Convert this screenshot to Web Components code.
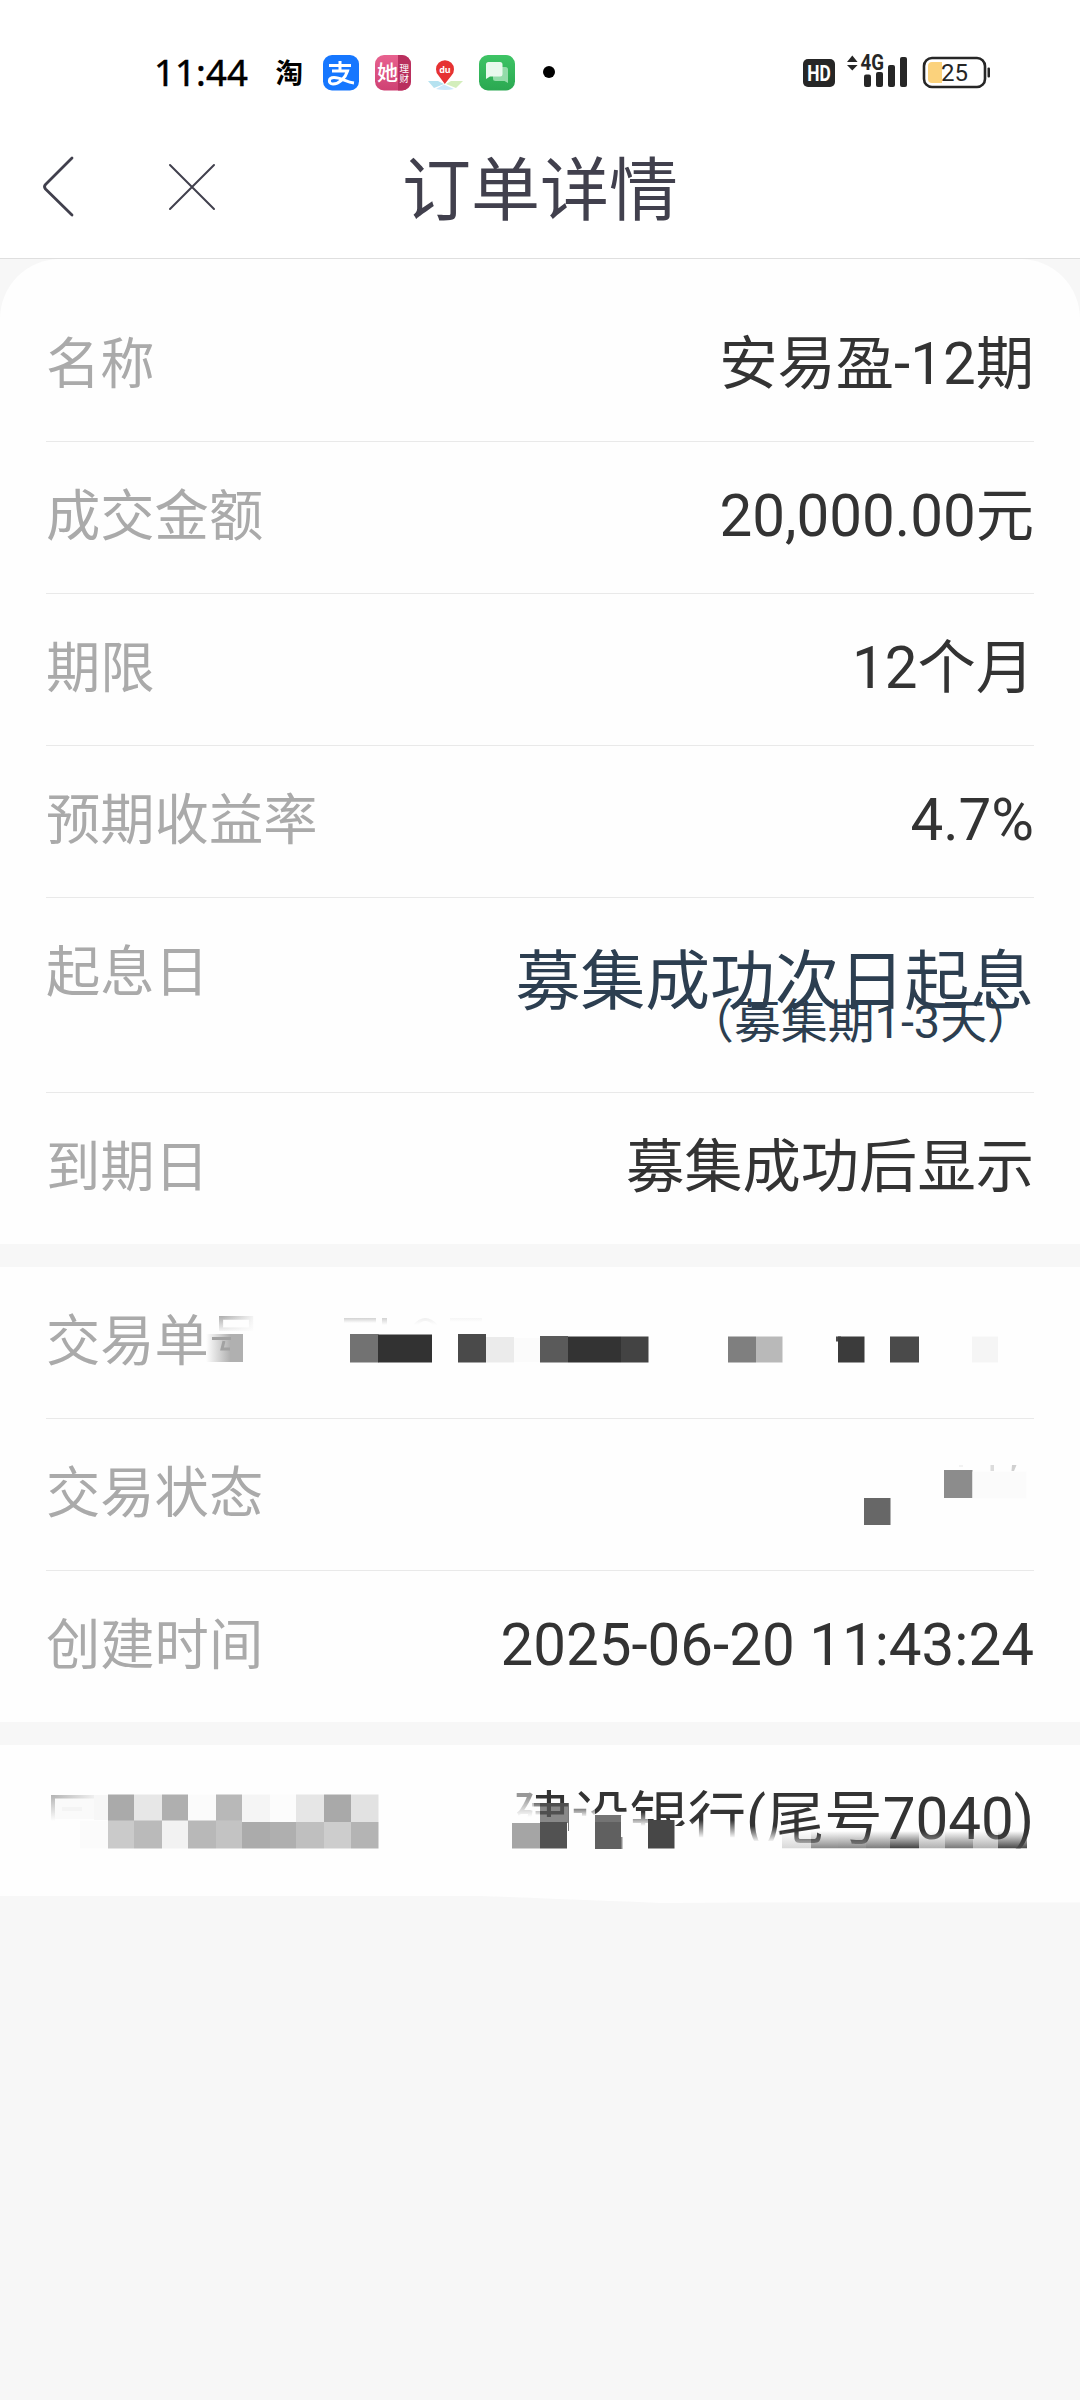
<!DOCTYPE html>
<html lang="zh-CN">
<head>
<meta charset="utf-8">
<title>订单详情</title>
<style>
html,body{margin:0;padding:0}
body{width:1080px;height:2400px;overflow:hidden;background:#f7f7f7;font-family:Roboto,"Noto Sans CJK SC",sans-serif}
</style>
</head>
<body>
<order-page></order-page>
<script>
function define(name, html){
  const t=document.createElement('template');
  t.innerHTML=html;
  customElements.define(name,class extends HTMLElement{
    constructor(){super();this.attachShadow({mode:'open'}).appendChild(t.content.cloneNode(true));}
  });
}
// Builds a run of mosaic blocks: [x, y, width, height, colour]
const blocks=a=>a.map(b=>`<rect x="${b[0]}" y="${b[1]}" width="${b[2]}" height="${b[3]}" fill="${b[4]}"/>`).join('');

define('status-bar',`<style>
:host{display:flex;height:130px;box-sizing:border-box;padding:40px 90px 0 155px;justify-content:space-between;align-items:flex-start;background:#fff}
svg{display:block;height:66px}
text{font-family:"Noto Sans","Noto Sans CJK SC",sans-serif}
</style>
<svg width="405" viewBox="155 40 405 66">
<defs><linearGradient id="g" x1="0" y1="0" x2="0" y2="1"><stop offset="0" stop-color="#3ec465"/><stop offset="1" stop-color="#2aa851"/></linearGradient>
<linearGradient id="p" x1="0" y1="0" x2="0" y2="1"><stop offset="0" stop-color="#e8628f"/><stop offset="1" stop-color="#cf4173"/></linearGradient></defs>
<text x="154" y="85.5" font-size="36.500" textLength="94" fill="#000" stroke="#000" stroke-width=".5">11:44</text>
<text x="275.500" y="82.500" font-size="27.500" font-weight="700" fill="#000" style="font-family:'Noto Sans CJK SC',sans-serif">淘</text>
<rect x="323" y="55" width="36" height="35.500" rx="9" fill="#1677ff"/>
<path d="M329 65.500H351M340 61V70M332 71H347.500C345.500 78 339 84 333 84C328 84 328 77.500 334 77.500C341 77.500 346 82 354 83" fill="none" stroke="#fff" stroke-width="3"/>
<rect x="375" y="55" width="36" height="35.500" rx="9" fill="url(#p)"/>
<path d="M398 55H402A9 9 0 0 1 411 64V81.500A9 9 0 0 1 402 90.500H398Z" fill="#b92f5e"/>
<text x="377" y="80" font-size="21" font-weight="500" fill="#fff">她</text>
<text x="399.500" y="71.500" font-size="9.500" fill="#fff">理</text><text x="399.500" y="81.500" font-size="9.500" fill="#fff">财</text>
<path d="M428 81H438L444 84L434 88Z" fill="#b5e2f0"/><path d="M451 81H463L456 88L446 84Z" fill="#d3eebc"/><path d="M436 89L444 84.500L454 89Q445 91 436 89Z" fill="#cbe8fa"/>
<path d="M444.800 84L438.500 75.500A9 9 0 1 1 451.500 75.500Z" fill="#e63232"/>
<text x="444.900" y="72.500" font-size="9" font-weight="700" text-anchor="middle" fill="#fff">du</text>
<rect x="479" y="55" width="36" height="35.500" rx="9" fill="url(#g)"/>
<path d="M493 67H505.500Q508 67 508 69.500V83L504.500 81H495.500Q493 81 493 78.500Z" fill="#93dca9"/>
<path d="M488.500 62H500Q502.500 62 502.500 64.500V74Q502.500 76.500 500 76.500H490L486 79V64.500Q486 62 488.500 62Z" fill="#e9f9ed"/>
<circle cx="549" cy="72" r="6" fill="#000"/>
</svg>
<svg width="190" viewBox="800 40 190 66">
<rect x="803" y="59" width="32" height="28" rx="5" fill="#262626"/>
<text x="819" y="80.800" font-size="21.500" font-weight="700" text-anchor="middle" textLength="23.500" lengthAdjust="spacingAndGlyphs" fill="#fff" style="font-family:Roboto">HD</text>
<path d="M847 62L852.300 55.500L857.600 62ZM847 65L852.300 70.500L857.600 65Z" fill="#262626"/>
<text x="860.500" y="70.300" font-size="21.500" font-weight="700" textLength="23.500" lengthAdjust="spacingAndGlyphs" fill="#262626" style="font-family:Roboto">4G</text>
<rect x="864" y="74.500" width="7" height="12.500" rx="2" fill="#262626"/><rect x="876" y="72" width="7" height="15" rx="2" fill="#262626"/><rect x="888" y="65" width="7" height="22" rx="2" fill="#262626"/><rect x="900" y="57" width="7" height="30" rx="2" fill="#262626"/>
<rect x="924" y="58" width="61" height="29" rx="8" fill="#fff" stroke="#262626" stroke-width="2.600"/>
<path d="M932 62H942V83H932Q928 83 928 79V66Q928 62 932 62Z" fill="#fbd27c"/>
<text x="954.500" y="81" font-size="24" text-anchor="middle" textLength="27" fill="#262626" style="font-family:Roboto">25</text>
<rect x="987.500" y="67.500" width="2.500" height="10" rx="1" fill="#262626"/>
</svg>`);

define('nav-bar',`<style>
:host{display:flex;height:129px;box-sizing:border-box;border-bottom:1px solid #dfdfdf;background:#fff;align-items:center;justify-content:space-between;color:#41404d}
svg{display:block;width:300px;height:128px}
h1{margin:0;font-size:69px;line-height:80px;font-weight:400;white-space:nowrap;padding-bottom:4px}
i{width:300px}
</style>
<svg viewBox="0 130 300 128" fill="none" stroke="#41404d" stroke-linecap="round" stroke-linejoin="round"><path d="M72 158L45.500 184.500Q43.500 186.700 45.500 189L72 215" stroke-width="2.800"/><path d="M170 165L214 209M214 165L170 209" stroke-width="2"/></svg>
<h1><slot></slot></h1><i></i>`);

define('info-row',`<style>
:host{display:flex;position:relative;height:152px;box-sizing:border-box;margin:0 46px;border-bottom:1px solid #e9e9e9;justify-content:space-between;align-items:flex-start;padding-top:34px}
:host([last]){height:151px;border-bottom:0}
:host([tall]){height:195px}
.l{font-size:54.300px;line-height:80px;padding-top:1px;color:#aaa;white-space:nowrap}
.v{font-size:58.300px;line-height:80px;color:#333;white-space:nowrap;text-align:right}
</style><span class="l"><slot name="label"></slot></span><span class="v"><slot></slot></span><slot name="cover"></slot>`);

define('start-note',`<style>
:host{display:block;color:#2c3e50}
.a{font-size:64.800px;line-height:80px;padding-top:10px}
.b{font-size:46.900px;line-height:48px;margin-top:-24px}
</style><div class="a"><slot></slot></div><div class="b"><slot name="sub"></slot></div>`);

define('info-card',`<style>
:host{display:block;background:#fefefe;margin-bottom:23px;overflow:hidden}
:host([first]){border-radius:60px 60px 0 0;padding-top:31px}
:host([end]){margin-bottom:0}
</style><slot></slot>`);

// Censor mosaics, laid over the text of a row
const cover=`<style>:host{position:absolute;left:-46px;top:0;width:1080px;height:151px}svg{display:block;width:1080px;height:151px}</style>`;
const grad=(id,a,b,h)=>`<linearGradient id="${id}" x1="0" y1="0" x2="${h?1:0}" y2="${h?0:1}"><stop offset="0" stop-color="${a}"/><stop offset="1" stop-color="${b}"/></linearGradient>`;
define('mosaic-number',cover+`<svg viewBox="0 1267 1080 151"><defs>
${grad('w','#fefefe00','#fefefe')}${grad('s','#fefefe','#aeaeae',1)}${grad('t','#d2d2d2','#fefefe')}${grad('x','#fefefe00','#fefefe',1)}</defs>
<rect x="208" y="1315" width="64" height="18" fill="url(#w)"/><rect x="222" y="1313" width="36" height="22" fill="url(#x)"/><rect x="258" y="1313" width="10" height="22" fill="#fefefe"/><rect x="208" y="1333" width="70" height="40" fill="#fefefe"/>
<rect x="206" y="1334" width="25" height="28" fill="url(#s)"/><rect x="230" y="1334" width="13" height="28" fill="#b0b0b0"/>
<path d="M212 1338.500H231M224 1341L222 1349H230" stroke="#a2a2a2" stroke-width="3" fill="none"/>
<g fill="url(#t)"><rect x="344" y="1318" width="32" height="5"/><rect x="382" y="1318" width="5" height="7"/><path d="M413 1325Q425 1311 438 1325L433 1325Q425 1317 418 1325Z" opacity=".35"/><rect x="450" y="1318" width="32" height="4" opacity=".2"/></g>
${blocks([[350,1334,28.5,28.5,'#727272'],[378,1334.5,54,28,'#323232'],[458,1334,28,28.5,'#4a4a4a'],[486,1337,28,25.5,'#ebebeb'],[514,1338,26,24,'#fbfbfb'],[540,1336,28,26.5,'#5a5a5a'],[568,1336.5,53,26,'#333'],[621,1336.5,27.5,26,'#434343'],[728,1336.5,28,26,'#7f7f7f'],[756,1336.5,26.5,26,'#b9b9b9'],[836,1336.5,5,5,'#4a4a4a'],[838,1336.5,26.5,26,'#3b3b3b'],[890,1336.5,29,26,'#4a4a4a'],[972,1336.5,26,26,'#f5f5f5']])}</svg>`);
define('mosaic-state',cover+`<svg viewBox="0 1419 1080 151">
${blocks([[944,1470,28.5,28,'#8c8c8c'],[972.5,1471.5,54,27,'#fbfbfb'],[864,1498,26.5,27,'#676767'],[990.5,1465,3.5,6,'#dcdcdc'],[959,1465,4,2,'#f2f2f2']])}<path d="M1012 1465H1016.500L1014 1471H1011.500Z" fill="#d0d0d0"/></svg>`);
define('mosaic-bank',cover+`<svg viewBox="0 1745 1080 151"><defs>
${grad('w','#fefefe00','#fefefe')}${grad('h','#b4b4b4','#efefef',1)}${grad('v','#b4b4b4','#fefefe')}
${['#d8d8d8','#888888','#868686','#7a7a7a','#404040','#b0b0b0','#767676','#b0b0b0','#484848'].map((c,i)=>grad('c'+i,c+'00',c)).join('')}</defs>
<rect x="53" y="1797" width="41" height="22" fill="#fafafa"/><rect x="51" y="1795" width="43" height="3.500" fill="url(#h)"/><rect x="51" y="1795" width="4" height="26" fill="url(#v)"/>
<rect x="62" y="1807" width="20" height="4" fill="#f4f4f4"/><rect x="94" y="1795" width="14" height="25" fill="#f7f7f7"/>
${(()=>{const x=[80,108,134,162,188,216,242,270,296,324,351,378.5];
const a=['#fafafa','#aaa','#e7e7e7','#afafaf','#fbfbfb','#b8b8b8','#f5f5f5','#fcfcfc','#e6e6e6','#a9a9a9','#e2e2e2'];
const b=['#fbfbfb','#cacaca','#bababa','#f2f2f2','#b8b8b8','#c3c3c3','#ababab','#afafaf','#bfbfbf','#cdcdcd','#b4b4b4'];
return blocks(a.map((c,i)=>[x[i],1794.5,x[i+1]-x[i],27.5,c]).slice(1))+blocks(b.map((c,i)=>[x[i],i<6?1820.5:1822,x[i+1]-x[i],i<6?28:26.5,c]));})()}
<rect x="508" y="1785" width="26" height="36" fill="#fefefe80"/><rect x="508" y="1797" width="32" height="20" fill="url(#w)"/><rect x="508" y="1817" width="64" height="39" fill="#fefefe"/><rect x="568" y="1804" width="27" height="13" fill="url(#w)"/>
<rect x="568" y="1816" width="62" height="40" fill="#fefefe"/><rect x="630" y="1812" width="18" height="14" fill="url(#w)"/><rect x="621" y="1826" width="64" height="30" fill="#fefefe"/>
<rect x="685" y="1820" width="62" height="18" fill="url(#w)"/><rect x="685" y="1837.500" width="62" height="18" fill="#fefefe"/>
<rect x="747" y="1826" width="33" height="16" fill="url(#w)"/><rect x="747" y="1841" width="35" height="18" fill="#fefefe"/>
<rect x="540" y="1803" width="28.500" height="20" fill="#5a5a5ab8"/>
${blocks([[512,1823,28,25.5,'#a5a5a5'],[540,1822,27,26.5,'#525252'],[568,1803,1,28,'#777'],[595,1815,26,8,'#555555d0'],[595,1822,26,27,'#606060'],[621,1837,1.5,12,'#888'],[648,1820,26.5,28.5,'#474747']])}
${[782,811,838,866,890,919,945,973,998].map((x,i,a)=>`<rect x="${x}" y="1831" width="${(a[i+1]||1027)-x}" height="17.500" fill="url(#c${i})"/>`).join('')}
<rect x="782" y="1848.500" width="258" height="14" fill="#fefefe"/></svg>`);

define('card-tail',`<style>:host{display:block;height:8px}svg{display:block;width:1080px;height:8px}</style>
<svg viewBox="0 0 1080 8"><path d="M480 0H1080V6.500H760L660 7Q590 4 480 0Z" fill="#fefefe"/></svg>`);

define('order-page',`<style>:host{display:block;width:1080px;min-height:2400px;background:#f7f7f7}</style>
<status-bar></status-bar>
<nav-bar>订单详情</nav-bar>
<info-card first>
<info-row><span slot="label">名称</span>安易盈-12期</info-row>
<info-row><span slot="label">成交金额</span>20,000.00元</info-row>
<info-row><span slot="label">期限</span>12个月</info-row>
<info-row><span slot="label">预期收益率</span>4.7%</info-row>
<info-row tall><span slot="label">起息日</span><start-note>募集成功次日起息<span slot="sub">（募集期1-3天）</span></start-note></info-row>
<info-row last><span slot="label">到期日</span>募集成功后显示</info-row>
</info-card>
<info-card>
<info-row><span slot="label">交易单号</span><mosaic-number slot="cover"></mosaic-number></info-row>
<info-row><span slot="label">交易状态</span><mosaic-state slot="cover"></mosaic-state></info-row>
<info-row last><span slot="label">创建时间</span>2025-06-20 11:43:24</info-row>
</info-card>
<info-card end>
<info-row last><span slot="label"></span>建设银行(尾号7040)<mosaic-bank slot="cover"></mosaic-bank></info-row>
</info-card>
<card-tail></card-tail>`);
</script>
</body>
</html>
